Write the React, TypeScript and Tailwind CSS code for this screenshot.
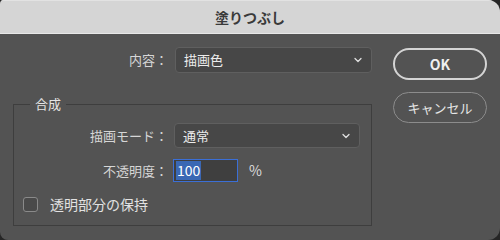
import { ChevronDown } from "lucide-react";

// ---------------------------------------------------------------------------
// Small pieces
// ---------------------------------------------------------------------------

const font = {
  fontFamily: '"Noto Sans CJK JP", "Noto Sans", "Liberation Sans", sans-serif',
};

function Select({ value, width, height }: { value: string; width: string; height: string }) {
  return (
    <div
      className={`flex items-center justify-between rounded-[4px] border border-[#5f5f5f] bg-[#474747] pl-[8px] pr-[7px] text-[13px] text-[#ececec] ${width} ${height}`}
    >
      <span>{value}</span>
      <ChevronDown size={12} strokeWidth={2.6} className="text-[#e0e0e0]" />
    </div>
  );
}

function Label({ children, width }: { children: string; width: string }) {
  return <span className={`text-right text-[13px] text-[#d6d6d6] ${width}`}>{children}</span>;
}

// ---------------------------------------------------------------------------
// Component
// ---------------------------------------------------------------------------

export default function App() {
  return (
    <div className="h-[240px] w-[500px] bg-[#262626]" style={font}>
      <div className="flex h-[240px] w-[500px] flex-col overflow-hidden rounded-tl-[4px] rounded-tr-[12px] rounded-bl-[8px] rounded-br-[12px] bg-[#535353]">
        {/* Title bar */}
        <div className="flex h-[34px] items-center justify-center border-t border-[#e2e2e2] border-b border-b-[#e8e8e8] bg-[#d5d5d5] text-[14px] font-bold text-[#3a3a3a]">
          塗りつぶし
        </div>

        <div className="flex">
          {/* Left: fields */}
          <div className="w-[380px] pl-[13px] pt-[13px]">
            <div className="flex h-[26px] items-center">
              <Label width="w-[155px]">内容：</Label>
              <div className="ml-[7px]">
                <Select value="描画色" width="w-[197px]" height="h-[26px]" />
              </div>
            </div>

            <fieldset className="mt-[22px] w-[359px] border border-[#3e3e3e] pb-[13px]">
              <legend className="ml-[16px] px-[5px] text-[13px] leading-[18px] text-[#e4e4e4]">合成</legend>

              <div className="mt-[10px] flex h-[25px] items-center">
                <Label width="w-[154px]">描画モード：</Label>
                <div className="ml-[6px]">
                  <Select value="通常" width="w-[186px]" height="h-[25px]" />
                </div>
              </div>

              <div className="mt-[11px] flex h-[23px] items-center">
                <Label width="w-[154px]">不透明度：</Label>
                <div className="ml-[5px] flex h-[23px] w-[65px] items-center border border-[#3b6fd6] bg-[#3f3f3f] pl-[2px]">
                  <span className="bg-[#3a68b4] px-[1px] text-[14px] leading-[19px] text-white">100</span>
                </div>
                <span className="ml-[11px] text-[14px] text-[#dcdcdc]">%</span>
              </div>

              <div className="mt-[15px] flex h-[15px] items-center pl-[9px]">
                <div className="h-[15px] w-[15px] rounded-[3px] border border-[#8a8a8a] bg-[#4a4a4a]" />
                <span className="ml-[12px] text-[14px] text-[#e2e2e2]">透明部分の保持</span>
              </div>
            </fieldset>
          </div>

          {/* Right: buttons */}
          <div className="flex flex-col pl-[13px] pt-[14px]">
            <button className="flex h-[32px] w-[94px] items-center justify-center rounded-full border-2 border-[#d4d4d4] text-[14px] font-bold text-[#f0f0f0]">
              OK
            </button>
            <button className="mt-[12px] flex h-[31px] w-[94px] items-center justify-center rounded-full border border-[#8c8c8c] text-[13px] text-[#e6e6e6]">
              キャンセル
            </button>
          </div>
        </div>
      </div>
    </div>
  );
}
